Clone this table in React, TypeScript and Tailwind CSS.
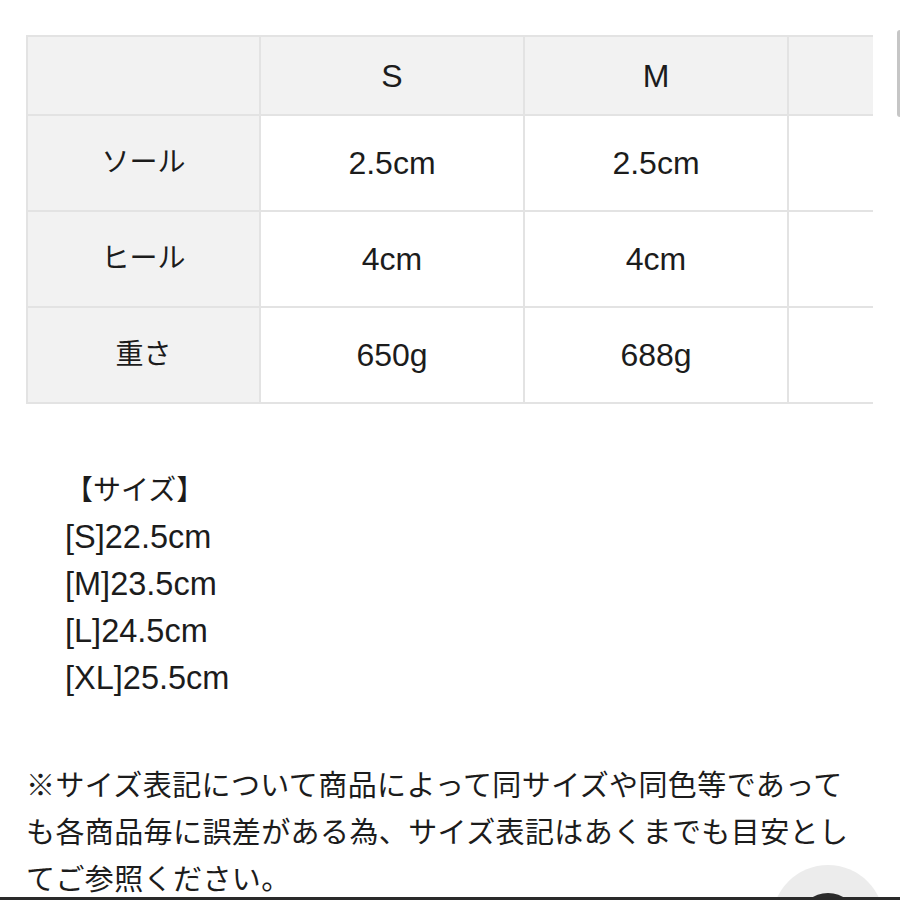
import React from "react";

const font = "font-['Liberation_Sans','Noto_Sans_CJK_JP',sans-serif]";

const rows = [
  { label: "ソール", s: "2.5cm", m: "2.5cm" },
  { label: "ヒール", s: "4cm", m: "4cm" },
  { label: "重さ", s: "650g", m: "688g" },
];

export default function App() {
  return (
    <div className={`relative h-[900px] w-[900px] overflow-hidden bg-white text-[#1c1c1c] ${font}`}>
      <div className="pt-[35px] pl-[26px]">
        <div className="w-[847px] overflow-hidden">
          <div className="grid w-[1027px] grid-cols-[233px_264px_264px_264px] border-l-2 border-t-2 border-[#e3e3e3]">
            <div className="h-[79px] border-b-2 border-r-2 border-[#e3e3e3] bg-[#f2f2f2]" />
            <div className="flex h-[79px] items-center justify-center border-b-2 border-r-2 border-[#e3e3e3] bg-[#f2f2f2] text-[32px]">S</div>
            <div className="flex h-[79px] items-center justify-center border-b-2 border-r-2 border-[#e3e3e3] bg-[#f2f2f2] text-[32px]">M</div>
            <div className="h-[79px] border-b-2 border-r-2 border-[#e3e3e3] bg-[#f2f2f2]" />
            {rows.map((r) => (
              <React.Fragment key={r.label}>
                <div className="flex h-[96px] items-center justify-center border-b-2 border-r-2 border-[#e3e3e3] bg-[#f2f2f2] text-[28px]">{r.label}</div>
                <div className="flex h-[96px] items-center justify-center border-b-2 border-r-2 border-[#e3e3e3] bg-white text-[32px]">{r.s}</div>
                <div className="flex h-[96px] items-center justify-center border-b-2 border-r-2 border-[#e3e3e3] bg-white text-[32px]">{r.m}</div>
                <div className="h-[96px] border-b-2 border-r-2 border-[#e3e3e3] bg-white" />
              </React.Fragment>
            ))}
          </div>
        </div>
      </div>

      <div className="mt-[63px] pl-[65px] leading-[47px]">
        <div className="text-[28px]">【サイズ】</div>
        <div className="text-[32.5px]">[S]22.5cm</div>
        <div className="text-[32.5px]">[M]23.5cm</div>
        <div className="text-[32.5px]">[L]24.5cm</div>
        <div className="text-[32.5px]">[XL]25.5cm</div>
      </div>

      <div className="mt-[61px] pl-[26px] text-[29px] leading-[47px] tracking-[0.4px]">
        <div className="whitespace-nowrap">※サイズ表記について商品によって同サイズや同色等であって</div>
        <div className="whitespace-nowrap">も各商品毎に誤差がある為、サイズ表記はあくまでも目安とし</div>
        <div className="whitespace-nowrap">てご参照ください。</div>
      </div>

      <div className="absolute right-0 top-[30px] h-[87px] w-[3px] rounded-l-sm bg-[#c6c6c6]" />

      <div className="absolute left-[772px] top-[865px] flex h-[112px] w-[112px] items-start justify-center rounded-full bg-[#ececec]">
        <div className="mt-[28px] h-[60px] w-[60px] rounded-full border-[6px] border-[#2b2b2b] bg-[#ececec]" />
      </div>

      <div className="absolute bottom-0 left-0 h-[3px] w-full bg-[#2a2a2a]" />
    </div>
  );
}
